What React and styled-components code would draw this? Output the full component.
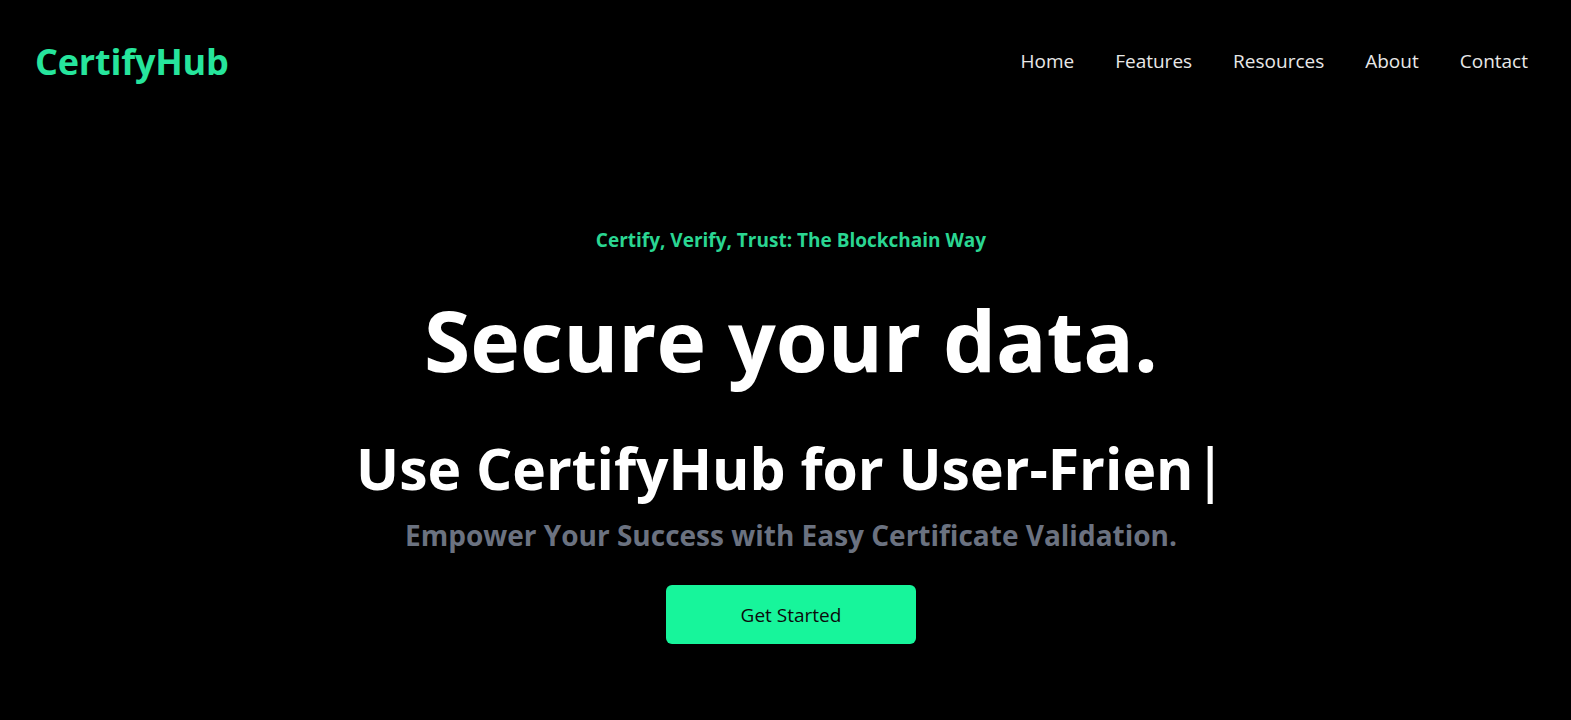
import React from "react";
import styled, { createGlobalStyle } from "styled-components";

const GlobalStyle = createGlobalStyle`
  html, body {
    margin: 0;
    padding: 0;
    background: #000000;
  }
  body {
    font-family: "Open Sans", "Noto Sans", sans-serif;
    color: #ffffff;
  }
`;

const links = ["Home", "Features", "Resources", "About", "Contact"];

const App = () => {
  return (
    <Page>
      <GlobalStyle />
      <NavBar>
        <Logo>CertifyHub</Logo>
        <NavLinks>
          {links.map((l) => (
            <NavLink key={l} href="#">
              {l}
            </NavLink>
          ))}
        </NavLinks>
      </NavBar>
      <Hero>
        <Tagline>Certify, Verify, Trust: The Blockchain Way</Tagline>
        <Headline>Secure your data.</Headline>
        <Typed>
          Use CertifyHub for User-Frien<Cursor>|</Cursor>
        </Typed>
        <SubText>Empower Your Success with Easy Certificate Validation.</SubText>
        <StartButton>Get Started</StartButton>
      </Hero>
    </Page>
  );
};

const Page = styled.div`
  width: 100%;
  min-height: 720px;
  background: #000000;
`;

const NavBar = styled.nav`
  display: flex;
  justify-content: space-between;
  align-items: center;
  height: 122px;
  padding: 0 43px 0 35px;
`;

const Logo = styled.div`
  font-size: 36px;
  font-weight: 700;
  color: #26e59c;
  letter-spacing: -0.2px;
`;

const NavLinks = styled.div`
  display: flex;
  align-items: center;
  gap: 41px;
`;

const NavLink = styled.a`
  font-size: 19px;
  color: #e8e8e8;
  text-decoration: none;
`;

const Hero = styled.section`
  display: flex;
  flex-direction: column;
  align-items: center;
  text-align: center;
  padding: 106px 0 0 11px;
`;

const Tagline = styled.div`
  font-size: 19px;
  line-height: 25px;
  font-weight: 700;
  color: #2ad692;
`;

const Headline = styled.h1`
  margin: 37px 0 0;
  font-size: 84px;
  line-height: 100px;
  font-weight: 700;
  color: #ffffff;
`;

const Typed = styled.h2`
  margin: 46px 0 0;
  font-size: 57px;
  line-height: 64px;
  font-weight: 700;
  color: #ffffff;
`;

const Cursor = styled.span`
  font-weight: 600;
  margin-left: 1px;
`;

const SubText = styled.p`
  margin: 17px 0 0;
  font-size: 28px;
  line-height: 36px;
  font-weight: 700;
  color: #6b7280;
`;

const StartButton = styled.button`
  margin-top: 32px;
  width: 250px;
  height: 59px;
  border: none;
  border-radius: 6px;
  background: #17f59b;
  color: #0b0b0b;
  font-family: inherit;
  font-size: 19px;
  font-weight: 500;
  cursor: pointer;
`;

export default App;
